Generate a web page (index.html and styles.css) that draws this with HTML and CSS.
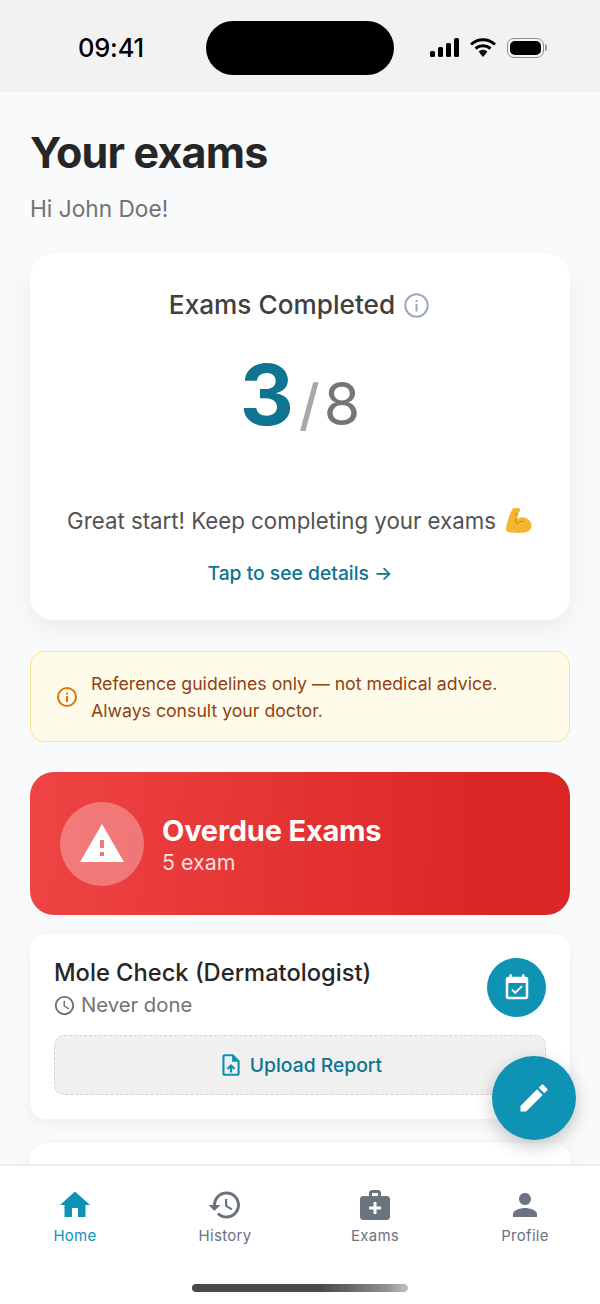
FILE: index.html
```
<!DOCTYPE html>
<html lang="en">
<head>
<meta charset="utf-8">
<title>Your exams</title>
<link rel="stylesheet" href="styles.css">
</head>
<body>
<div class="phone">
  <header class="status">
    <span class="time">09:41</span>
    <span class="island"></span>
    <span class="status-icons">
      <svg class="signal" viewBox="0 0 30 19"><rect x="0" y="13" width="5" height="6" rx="1.5"/><rect x="8" y="9" width="5" height="10" rx="1.5"/><rect x="16" y="5" width="5" height="14" rx="1.5"/><rect x="24" y="0" width="5" height="19" rx="1.5"/></svg>
      <svg class="wifi" viewBox="0 0 26 19"><path d="M13 15l3.2 0.2L13 19l-3.2-3.8z"/><path d="M1 6.5C8 0 18 0 25 6.5" fill="none" stroke="#000" stroke-width="3"/><path d="M5.5 10.5c4.500-3.800 10.500-3.800 15 0" fill="none" stroke="#000" stroke-width="3"/><path d="M9.500 14.500c2.200-1.600 4.800-1.600 7 0" fill="none" stroke="#000" stroke-width="2.800"/></svg>
      <span class="battery"><span class="battery-fill"></span></span>
      <span class="battery-cap"></span>
    </span>
  </header>

  <main class="content">
    <h1 class="title">Your exams</h1>
    <p class="greeting">Hi John Doe!</p>

    <section class="summary">
      <h2 class="summary-title">Exams Completed
        <svg class="summary-info" viewBox="0 0 25 25"><circle cx="12.500" cy="12.500" r="11.200" fill="none" stroke="#9ca8bb" stroke-width="2"/><rect x="11.500" y="11" width="2" height="7.500" fill="#9ca8bb"/><rect x="11.500" y="7" width="2" height="2" fill="#9ca8bb"/></svg>
      </h2>
      <div class="score"><span class="score-done">3</span><span class="score-slash">/</span><span class="score-total">8</span></div>
      <p class="encourage">Great start! Keep completing your exams
        <svg class="muscle" viewBox="0 0 28 28"><path d="M10 1.500c1.800-.8 4.300-.7 5 .6.600 1.200-.1 2.400-1.200 3l-.6 1.800c-.4 1.500-.8 3.500-.6 5.300 2-1.900 5.400-2.400 8.200-1.200 3.400 1.400 5.500 4.100 5.700 7.400.2 3.500-2.500 6.400-6.700 7.100-4.900.8-11.600.6-16.300-.4-1.900-.4-2.700-1.700-2.500-3.300.6-5 2.900-12.800 5.700-18.300.9-1.700 2-3.200 4.300-2z" fill="#f5b52e"/><path d="M9.800 6.500c.8.700 1.700.9 2.700.6M11 11.500c-.9 2-.4 4 1 5.200 1.300-1.600 3.500-2.500 5.800-2.200" fill="none" stroke="#c9831a" stroke-width="1" stroke-linecap="round"/></svg>
      </p>
      <a class="details-link">Tap to see details →</a>
    </section>

    <aside class="notice">
      <svg class="notice-icon" viewBox="0 0 20 20"><circle cx="10" cy="10" r="9" fill="none" stroke="#d97706" stroke-width="2"/><rect x="9" y="9" width="2" height="6" fill="#d97706"/><rect x="9" y="5.500" width="2" height="2" fill="#d97706"/></svg>
      <p class="notice-text">Reference guidelines only — not medical advice.<br>Always consult your doctor.</p>
    </aside>

    <section class="overdue">
      <span class="overdue-badge">
        <svg class="overdue-icon" viewBox="0 0 24 24"><path d="M1 21h22L12 2 1 21zm12-3h-2v-2h2v2zm0-4h-2v-4h2v4z"/></svg>
      </span>
      <div class="overdue-text">
        <h2 class="overdue-title">Overdue Exams</h2>
        <p class="overdue-count">5 exam</p>
      </div>
    </section>

    <article class="exam">
      <div class="exam-head">
        <div>
          <h3 class="exam-title">Mole Check (Dermatologist)</h3>
          <p class="exam-meta">
            <svg class="meta-icon" viewBox="0 0 24 24"><path d="M11.990 2C6.470 2 2 6.480 2 12s4.470 10 9.990 10C17.520 22 22 17.520 22 12S17.520 2 11.990 2zM12 20c-4.420 0-8-3.580-8-8s3.580-8 8-8 8 3.580 8 8-3.580 8-8 8zm.5-13H11v6l5.250 3.150.75-1.230-4.500-2.670z"/></svg>
            Never done
          </p>
        </div>
        <span class="exam-action">
          <svg class="action-icon" viewBox="0 0 24 24"><path d="M16.530 11.060L15.470 10l-4.880 4.880-2.120-2.120-1.060 1.060L10.590 17l5.940-5.940zM19 3h-1V1h-2v2H8V1H6v2H5c-1.110 0-1.990.9-1.990 2L3 19c0 1.100.89 2 2 2h14c1.100 0 2-.9 2-2V5c0-1.100-.9-2-2-2zm0 16H5V8h14v11z"/></svg>
        </span>
      </div>
      <button class="upload">
        <svg class="upload-icon" viewBox="0 0 24 24"><path d="M14 2H6c-1.100 0-1.990.9-1.990 2L4 20c0 1.100.89 2 1.990 2H18c1.100 0 2-.9 2-2V8l-6-6zm4 18H6V4h7v5h5v11zM8 15.010l1.410 1.410L11 14.840V19h2v-4.160l1.590 1.590L16 15.010 12.010 11z"/></svg>
        Upload Report
      </button>
    </article>
    <article class="exam"></article>
  </main>

  <button class="fab">
    <svg class="fab-icon" viewBox="0 0 24 24"><path d="M3 17.250V21h3.750L17.810 9.940l-3.750-3.750L3 17.250zM20.710 7.040c.39-.39.39-1.020 0-1.410l-2.340-2.340c-.39-.39-1.020-.39-1.410 0l-1.830 1.830 3.750 3.750 1.830-1.830z"/></svg>
  </button>

  <nav class="tabs">
    <a class="tab tab-active">
      <svg class="tab-icon" viewBox="0 0 24 24"><path d="M10 20v-6h4v6h5v-8h3L12 3 2 12h3v8z"/></svg>
      Home
    </a>
    <a class="tab">
      <svg class="tab-icon" viewBox="0 0 24 24"><path d="M13 3c-4.970 0-9 4.030-9 9H1l3.890 3.890.07.14L9 12H6c0-3.870 3.130-7 7-7s7 3.130 7 7-3.130 7-7 7c-1.930 0-3.680-.79-4.940-2.060l-1.420 1.420C8.270 19.990 10.510 21 13 21c4.970 0 9-4.030 9-9s-4.030-9-9-9zm-1 5v5l4.280 2.540.72-1.210-3.500-2.080V8H12z"/></svg>
      History
    </a>
    <a class="tab">
      <svg class="tab-icon" viewBox="0 0 24 24"><path d="M20 6h-4V4c0-1.100-.9-2-2-2h-4c-1.100 0-2 .9-2 2v2H4c-1.100 0-2 .9-2 2v12c0 1.100.9 2 2 2h16c1.100 0 2-.9 2-2V8c0-1.100-.9-2-2-2zM10 4h4v2h-4V4zm6 11h-3v3h-2v-3H8v-2h3v-3h2v3h3v2z"/></svg>
      Exams
    </a>
    <a class="tab">
      <svg class="tab-icon" viewBox="0 0 24 24"><path d="M12 12c2.210 0 4-1.790 4-4s-1.790-4-4-4-4 1.790-4 4 1.790 4 4 4zm0 2c-2.670 0-8 1.340-8 4v2h16v-2c0-2.660-5.330-4-8-4z"/></svg>
      Profile
    </a>
    <span class="home-indicator"></span>
  </nav>
</div>
</body>
</html>
```
FILE: styles.css
```
* { box-sizing: border-box; }
html, body { margin: 0; padding: 0; }
body { font-family: Inter, "Liberation Sans", sans-serif; background: #f9fafb; }
h1, h2, h3, p { margin: 0; font-weight: inherit; }
svg { display: block; flex: none; }

.phone { position: relative; width: 600px; height: 1304px; display: flex; flex-direction: column; overflow: hidden; background: #f9fafb; }

.status { flex: none; height: 92px; background: #f2f2f2; display: flex; align-items: center; position: relative; padding-left: 78px; padding-top: 3px; }
.time { font-size: 25.500px; font-weight: 500; color: #000; letter-spacing: -0.2px; width: 128px; }
.island { width: 188px; height: 54px; border-radius: 27px; background: #000; margin-top: 1px; }
.status-icons { display: flex; align-items: center; margin-left: 36px; margin-top: 0; }
.signal { width: 30px; height: 19px; fill: #000; }
.wifi { width: 26px; height: 19px; margin-left: 10px; fill: #000; }
.battery { width: 37px; height: 20px; border: 1.5px solid #8e8e8e; border-radius: 7px; padding: 2px; margin-left: 11px; display: flex; }
.battery-fill { flex: 1; background: #000; border-radius: 5px; }
.battery-cap { width: 2px; height: 7px; background: #9a9a9a; border-radius: 0 2px 2px 0; margin-left: 1px; }

.content { flex: 1; min-height: 0; overflow: hidden; padding: 32px 30px 0; }
.title { font-size: 43px; line-height: 56px; font-weight: 700; color: #262626; letter-spacing: -0.8px; }
.greeting { font-size: 22.700px; line-height: 28px; color: #737373; margin-top: 15px; margin-bottom: -1px; }

.summary { margin-top: 31px; height: 367px; background: #fff; border-radius: 24px; box-shadow: 0 10px 28px rgba(0, 0, 0, 0.06); display: flex; flex-direction: column; align-items: center; padding-top: 36px; }
.summary-title { display: flex; align-items: center; gap: 9px; font-size: 26.200px; line-height: 32px; font-weight: 500; color: #404040; transform: translateX(-1px); }
.summary-info { width: 25px; height: 25px; }
.score { display: flex; align-items: baseline; margin-top: 24px; height: 100px; line-height: 100px; }
.score-done { font-size: 84px; font-weight: 700; color: #0e7490; }
.score-slash { font-size: 56px; font-weight: 500; color: #a8a8a8; margin: 0 4px 0 5px; }
.score-total { font-size: 59px; font-weight: 400; color: #757575; }
.encourage { display: flex; align-items: center; gap: 9px; margin-top: 61px; font-size: 22.250px; line-height: 30px; color: #525252; }
.muscle { width: 28px; height: 28px; }
.details-link { margin-top: 24px; font-size: 19.300px; line-height: 26px; font-weight: 500; color: #0e7490; }

.notice { margin-top: 31px; height: 91px; background: #fffbeb; border: 1.5px solid #fde68a; border-radius: 14px; display: flex; align-items: center; gap: 14px; padding-left: 26px; }
.notice-icon { width: 20px; height: 20px; }
.notice-text { font-size: 17.700px; line-height: 27px; color: #92400e; }

.overdue { margin-top: 30px; height: 143px; border-radius: 24px; background: linear-gradient(92deg, #ef4444, #dc2626 85%); display: flex; align-items: center; gap: 18px; padding-left: 30px; color: #fff; }
.overdue-badge { width: 84px; height: 84px; border-radius: 50%; background: rgba(255, 255, 255, 0.3); display: flex; align-items: center; justify-content: center; }
.overdue-icon { width: 48px; height: 48px; fill: #fff; }
.overdue-text { padding-top: 2px; }
.overdue-title { font-size: 29px; line-height: 35px; font-weight: 700; letter-spacing: -0.2px; }
.overdue-count { font-size: 21.400px; line-height: 28px; color: rgba(255, 255, 255, 0.85); }

.exam { margin-top: 19px; background: #fff; border-radius: 16px; box-shadow: 0 4px 16px rgba(0, 0, 0, 0.05); padding: 24px; min-height: 185px; }
.exam + .exam { margin-top: 24px; }
.exam-head { display: flex; justify-content: space-between; align-items: flex-start; height: 77px; }
.exam-title { font-size: 23.700px; line-height: 30px; font-weight: 500; color: #262626; }
.exam-meta { display: flex; align-items: center; gap: 5px; font-size: 20.300px; line-height: 28px; color: #737373; margin-top: 3px; }
.meta-icon { width: 23px; height: 23px; fill: #737373; margin-left: -1px; }
.exam-action { width: 59px; height: 59px; border-radius: 50%; background: #0e93b5; display: flex; align-items: center; justify-content: center; }
.action-icon { width: 30px; height: 30px; fill: #fff; }
.upload { width: 100%; height: 60px; background: #f0f0f0; border: 1.5px dashed #d4d4d4; border-radius: 10px; display: flex; align-items: center; justify-content: center; gap: 6px; font: 500 19.300px Inter, "Liberation Sans", sans-serif; color: #0e7490; padding: 0; }
.upload-icon { width: 26px; height: 26px; fill: #0e93b5; }

.fab { position: absolute; left: 492px; top: 1056px; width: 84px; height: 84px; border: 0; border-radius: 50%; background: #0e93b5; box-shadow: 0 6px 18px rgba(0, 0, 0, 0.22); display: flex; align-items: center; justify-content: center; padding: 0; }
.fab-icon { width: 36px; height: 36px; fill: #fff; }

.tabs { flex: none; height: 140px; position: relative; z-index: 1; background: #fff; border-top: 2px solid #ececee; display: flex; align-items: flex-start; padding-top: 21px; }
.tab { flex: 1; display: flex; flex-direction: column; align-items: center; gap: 3px; font-size: 15px; line-height: 20px; font-weight: 400; letter-spacing: 0.3px; color: #6b7280; }
.tab-active { color: #0e93b5; }
.tab-icon { width: 36px; height: 36px; fill: currentColor; }
.home-indicator { position: absolute; left: 192px; top: 118px; width: 216px; height: 8px; border-radius: 4px; background: linear-gradient(90deg, #4a4a4a 60%, #8f8f8f 90%, #c4c4c4); }
```
